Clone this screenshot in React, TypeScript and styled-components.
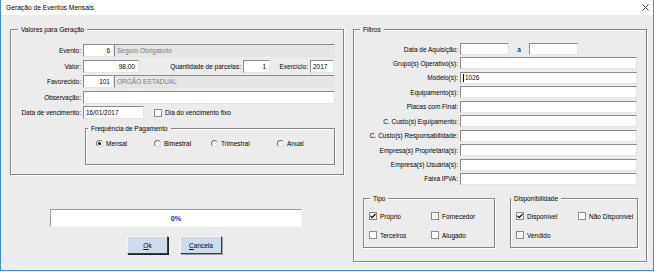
import React from 'react';
import styled, { createGlobalStyle } from 'styled-components';

const GlobalStyle = createGlobalStyle`
  html, body {
    margin: 0;
    padding: 0;
    background: #ffffff;
  }
  body {
    font-family: "Liberation Sans", Arial, sans-serif;
    font-size: 6.5px;
    color: #000;
  }
`;

const Window = styled.div`
  width: 654px;
  height: 271px;
  box-sizing: border-box;
  border: 1px solid #3d8fdc;
  border-top: none;
  background: #ececec;
  display: flex;
  flex-direction: column;
`;

const TitleBar = styled.div`
  height: 15px;
  flex: none;
  background: #fff;
  display: flex;
  align-items: center;
  justify-content: space-between;
  padding: 0 7px 0 5px;
  font-size: 6.7px;
`;

const Body = styled.div`
  display: flex;
  padding: 14px 0 0 9px;
`;

const LeftColumn = styled.div`
  width: 334px;
  display: flex;
  flex-direction: column;
`;

const GroupBox = styled.div<{ $w: number; $h: number }>`
  position: relative;
  box-sizing: border-box;
  width: ${(p) => p.$w}px;
  height: ${(p) => p.$h}px;
  flex: none;
  border: 1px solid #858585;
  box-shadow: inset 1px 1px 0 #fff, 1px 1px 0 #fff;
`;

const GroupTitle = styled.span<{ $x: number }>`
  position: absolute;
  top: -5px;
  left: ${(p) => p.$x}px;
  padding: 0 3px;
  line-height: 9px;
  background: #ececec;
  white-space: nowrap;
`;

const ValoresInner = styled.div`
  padding: 14px 0 0 0;
`;

const FormRow = styled.div<{ $h: number; $gap: number }>`
  display: flex;
  align-items: center;
  height: ${(p) => p.$h}px;
  margin-bottom: ${(p) => p.$gap}px;
`;

const Label = styled.span<{ $w: number }>`
  width: ${(p) => p.$w}px;
  flex: none;
  box-sizing: border-box;
  padding-right: 2px;
  text-align: right;
  white-space: nowrap;
`;

const TextBox = styled.div<{ $w: number; $right?: boolean; $disabled?: boolean }>`
  width: ${(p) => p.$w}px;
  height: 100%;
  flex: none;
  box-sizing: border-box;
  display: flex;
  align-items: center;
  justify-content: ${(p) => (p.$right ? 'flex-end' : 'flex-start')};
  padding: 0 3px 0 2px;
  background: ${(p) => (p.$disabled ? '#e6e6e6' : '#fff')};
  color: ${(p) => (p.$disabled ? '#7a7a7a' : '#000')};
  border: 1px solid;
  border-color: #8a8a8a #e4e4e4 #e4e4e4 #8a8a8a;
  white-space: nowrap;
  overflow: hidden;
`;

const Caret = styled.span`
  width: 1px;
  height: 8px;
  background: #000;
  margin-right: 1px;
`;

const CheckItem = styled.label<{ $gap?: number }>`
  display: flex;
  align-items: center;
  gap: ${(p) => p.$gap ?? 2}px;
  white-space: nowrap;
`;

const CheckSquare = styled.span`
  width: 8px;
  height: 8px;
  box-sizing: border-box;
  flex: none;
  background: #fff;
  border: 1px solid #8a8a8a;
  display: flex;
  align-items: center;
  justify-content: center;
`;

const RadioCircle = styled.span<{ $on?: boolean }>`
  width: 7px;
  height: 7px;
  box-sizing: border-box;
  flex: none;
  border-radius: 50%;
  background: #fff;
  border: 1px solid;
  border-color: #6e6e6e #d8d8d8 #d8d8d8 #6e6e6e;
  display: flex;
  align-items: center;
  justify-content: center;
  &::after {
    content: '';
    display: ${(p) => (p.$on ? 'block' : 'none')};
    width: 3px;
    height: 3px;
    border-radius: 50%;
    background: #111;
  }
`;

const FreqBox = styled(GroupBox)`
  margin: 9px 0 0 74px;
`;

const RadioRow = styled.div`
  display: grid;
  grid-template-columns: 58px 57px 66px auto;
  align-items: center;
  padding: 11px 0 0 10px;
`;

const Progress = styled.div`
  margin: 34px 0 0 40px;
  width: 252px;
  height: 18px;
  box-sizing: border-box;
  background: #fff;
  border: 1px solid;
  border-color: #9a9a9a #f4f4f4 #f4f4f4 #9a9a9a;
  display: flex;
  align-items: center;
  justify-content: center;
  color: #1c1ce0;
  font-weight: bold;
  font-size: 7.3px;
`;

const ButtonRow = styled.div`
  display: flex;
  gap: 12px;
  margin: 9px 0 0 117px;
`;

const Button = styled.button<{ $w: number; $default?: boolean }>`
  width: ${(p) => p.$w}px;
  height: 18px;
  padding: 0;
  font: inherit;
  color: #000;
  background: #cddcec;
  border: 1px solid;
  border-color: #f6f6f6 #3c3c3c #3c3c3c #f6f6f6;
  box-shadow: ${(p) => (p.$default ? '1px 1px 0 #222' : '1px 1px 0 #a0a0a0')};
  & u {
    text-decoration: underline;
  }
`;

const FiltrosBox = styled(GroupBox)`
  margin-left: 9px;
`;

const FiltrosInner = styled.div`
  padding-top: 13px;
`;

const AndLabel = styled.span`
  width: 20px;
  text-align: center;
`;

const SubGroups = styled.div`
  display: flex;
  gap: 15px;
  margin: 13px 0 0 9px;
`;

const CheckGrid = styled.div`
  display: grid;
  grid-template-columns: 62px auto;
  grid-auto-rows: 19px;
  align-items: center;
  padding: 8px 0 0 5px;
`;

const CloseIcon = () => (
  <svg width="7" height="7" viewBox="0 0 7 7" style={{ marginRight: -3 }}>
    <path d="M0.5 0.5 L6.5 6.5 M6.5 0.5 L0.5 6.5" stroke="#444" strokeWidth="1" />
  </svg>
);

const Tick = () => (
  <svg width="6" height="6" viewBox="0 0 6 6">
    <path d="M0.5 2.8 L2.2 4.6 L5.5 1" stroke="#111" strokeWidth="1.3" fill="none" />
  </svg>
);

const Check = ({ label, on }: { label: string; on?: boolean }) => (
  <CheckItem $gap={3}>
    <CheckSquare>{on && <Tick />}</CheckSquare>
    {label}
  </CheckItem>
);

const Radio = ({ label, on }: { label: string; on?: boolean }) => (
  <CheckItem $gap={3}>
    <RadioCircle $on={on} />
    {label}
  </CheckItem>
);

const filterRows = [
  'Grupo(s) Operativo(s):',
  'Modelo(s):',
  'Equipamento(s):',
  'Placas com Final:',
  'C. Custo(s) Equipamento:',
  'C. Custo(s) Responsabilidade:',
  'Empresa(s) Proprietária(s):',
  'Empresa(s) Usuária(s):',
  'Faixa IPVA:',
];

export default function App() {
  return (
    <>
      <GlobalStyle />
      <Window>
        <TitleBar>
          <span>Geração de Eventos Mensais</span>
          <CloseIcon />
        </TitleBar>
        <Body>
          <LeftColumn>
            <GroupBox $w={334} $h={146}>
              <GroupTitle $x={7}>Valores para Geração</GroupTitle>
              <ValoresInner>
                <FormRow $h={13} $gap={2.5}>
                  <Label $w={72}>Evento:</Label>
                  <TextBox $w={31} $right>6</TextBox>
                  <TextBox $w={221} $disabled>Seguro Obrigatorio</TextBox>
                </FormRow>
                <FormRow $h={13} $gap={2.5}>
                  <Label $w={72}>Valor:</Label>
                  <TextBox $w={56} $right>98,00</TextBox>
                  <Label $w={104}>Quantidade de parcelas:</Label>
                  <TextBox $w={27} $right>1</TextBox>
                  <Label $w={40}>Exercício:</Label>
                  <TextBox $w={24}>2017</TextBox>
                </FormRow>
                <FormRow $h={13} $gap={2.5}>
                  <Label $w={72}>Favorecido:</Label>
                  <TextBox $w={31} $right>101</TextBox>
                  <TextBox $w={221} $disabled>ORGÃO ESTADUAL</TextBox>
                </FormRow>
                <FormRow $h={13} $gap={2.5}>
                  <Label $w={72}>Observação:</Label>
                  <TextBox $w={252} />
                </FormRow>
                <FormRow $h={13} $gap={0}>
                  <Label $w={72}>Data de vencimento:</Label>
                  <TextBox $w={61}>16/01/2017</TextBox>
                  <CheckItem $gap={3} style={{ marginLeft: 10 }}>
                    <CheckSquare />
                    Dia do vencimento fixo
                  </CheckItem>
                </FormRow>
                <FreqBox $w={250} $h={37}>
                  <GroupTitle $x={2}>Frequência de Pagamento</GroupTitle>
                  <RadioRow>
                    <Radio label="Mensal" on />
                    <Radio label="Bimestral" />
                    <Radio label="Trimestral" />
                    <Radio label="Anual" />
                  </RadioRow>
                </FreqBox>
              </ValoresInner>
            </GroupBox>
            <Progress>0%</Progress>
            <ButtonRow>
              <Button $w={41} $default>
                <u>O</u>k
              </Button>
              <Button $w={42}>
                <u>C</u>ancela
              </Button>
            </ButtonRow>
          </LeftColumn>

          <FiltrosBox $w={294} $h={233}>
            <GroupTitle $x={6}>Filtros</GroupTitle>
            <FiltrosInner>
              <FormRow $h={12} $gap={2.44}>
                <Label $w={106}>Data de Aquisição:</Label>
                <TextBox $w={49} />
                <AndLabel>a</AndLabel>
                <TextBox $w={49} />
              </FormRow>
              {filterRows.map((label) => (
                <FormRow key={label} $h={12} $gap={2.44}>
                  <Label $w={106}>{label}</Label>
                  <TextBox $w={177}>
                    {label === 'Modelo(s):' && (
                      <>
                        <Caret />
                        1026
                      </>
                    )}
                  </TextBox>
                </FormRow>
              ))}
              <SubGroups>
                <GroupBox $w={132} $h={50}>
                  <GroupTitle $x={6}>Tipo</GroupTitle>
                  <CheckGrid>
                    <Check label="Próprio" on />
                    <Check label="Fornecedor" />
                    <Check label="Terceiros" />
                    <Check label="Alugado" />
                  </CheckGrid>
                </GroupBox>
                <GroupBox $w={128} $h={50}>
                  <GroupTitle $x={0}>Disponibilidade</GroupTitle>
                  <CheckGrid>
                    <Check label="Disponível" on />
                    <Check label="Não Disponível" />
                    <Check label="Vendido" />
                  </CheckGrid>
                </GroupBox>
              </SubGroups>
            </FiltrosInner>
          </FiltrosBox>
        </Body>
      </Window>
    </>
  );
}
